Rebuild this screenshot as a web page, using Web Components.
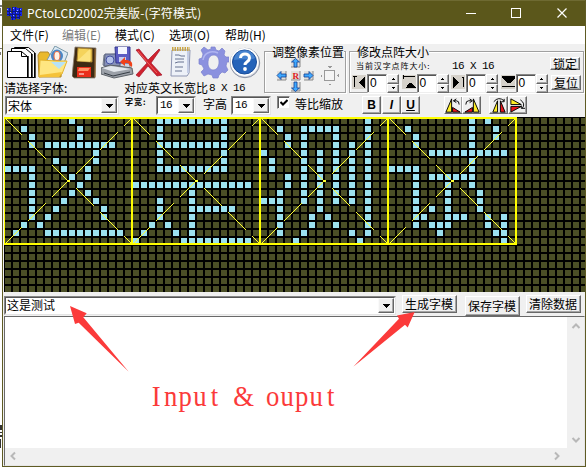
<!DOCTYPE html>
<html lang="zh-CN">
<head>
<meta charset="utf-8">
<title>PCtoLCD2002</title>
<style>
html,body{margin:0;background:#fff;overflow:hidden}
body{width:588px;height:469px;font:12px/14px "Liberation Sans","Noto Sans CJK SC",sans-serif;color:#000}
</style>
</head>
<body>
<lcd-app></lcd-app>
<script>
const CJK = '"Noto Sans CJK SC",sans-serif';
function define(name, css, html) {
  const t = document.createElement('template');
  customElements.define(name, class extends HTMLElement {
    constructor() {
      super();
      this.attachShadow({mode: 'open'});
    }
    connectedCallback() {
      if (this.shadowRoot.firstChild) return;
      t.innerHTML = '<style>*{box-sizing:border-box}:host{box-sizing:border-box}svg{display:block;flex:none}' + css + '</style>' + (typeof html === 'function' ? html(this) : html);
      this.shadowRoot.append(t.content.cloneNode(true));
    }
  });
}

define('title-bar',
  `:host{display:flex;height:26px;background:#5b571b;border-top:1px solid #6e6a32;color:#fff;align-items:center;padding:0 17px 1px 3px;font:12px/16px ${CJK}}
   .t{margin-left:5px;flex:1;white-space:nowrap;letter-spacing:.14px}`,
  `<svg width="16" height="15" viewBox="0 0 16 15" shape-rendering="crispEdges"><g fill="#1624e8"><path d="M1 2h4v8H1zM6 1h5v8H6zM11 2h5v8h-5zM5 7h4v7H5zM11 8h3v5h-3z"/></g><path d="M1 5h15M1 8h14M5 11h9M3 2v8M6 1v13M9 1v12M13 2v11" stroke="#0b1680" fill="none"/><path d="M1 3h1v1H1zM7 2h1v1H7zM11 4h1v1h-1zM7 9h1v1H7zM10 6h1v1h-1zM4 6h1v1H4zM14 3h1v1h-1z" fill="#8faaff"/></svg>
   <span class="t">PCtoLCD2002完美版-(字符模式)</span>
   <svg width="102" height="12" viewBox="0 0 102 12" stroke="#fff" fill="none"><path d="M0 6.5h10" shape-rendering="crispEdges"/><path d="M45.5 1.5h9v9h-9z" shape-rendering="crispEdges"/><path d="M91.500 1.500l9 9m0-9l-9 9" stroke-width="1.2"/></svg>`);

define('menu-bar',
  `:host{display:flex;height:18px;background:#fff;padding-left:7px;font:12px/17px ${CJK};white-space:nowrap}
   span{width:53px}.w{width:54px}.w2{width:56px}.d{color:#7a7a7a}`,
  `<span style="width:52px">文件(F)</span><span class="d">编辑(E)</span><span class="w">模式(C)</span><span class="w2">选项(O)</span><span>帮助(H)</span>`);

const icons = {
  docs: [30, `<g fill="#fff" stroke="#000"><path d="M7.500 1.500h14l6 5v25h-20z"/><path d="M4.500 2.500h14l6 5v24h-20z"/><path d="M.5 5.500h14l6 5v21H.5z"/><path d="M14.500 5.500v5h6" fill="none"/></g><path d="M21 10v22M25 8v24M28 7v25" stroke="#000" stroke-width="1.400"/>`],
  folder: [31, `<path d="M1 9l2-3h8l2 3h13l-2 22H2z" fill="#eab92c" stroke="#b48a2a"/><path d="M18 0l13 7-6 15-15-8z" fill="#ddeaf3" stroke="#7898a8"/><ellipse cx="20" cy="10" rx="6" ry="6.500" fill="#4b87c6"/><ellipse cx="20" cy="10" rx="3" ry="4.500" fill="#fff1e5" stroke="#f36b40"/><path d="M3 14l17 1 10 0-5 13L2 31z" fill="#ffe681" stroke="#e4b32e"/><path d="M14 16h15l-7 7z" fill="#b6e2f8"/><path d="M3 29l22-3-3 5H3z" fill="#f5c239"/>`],
  floppy: [25, `<path d="M3 1l21 1-1 30H2L0 30z" fill="#3e2a13" stroke="#8f8476" stroke-width=".8"/><path d="M6 2l14 1v13L5 15z" fill="#f5d35b" stroke="#ac852e"/><path d="M5 15L18 3v13z" fill="#ffe98e" opacity=".7"/><path d="M5 21h14v10H5z" fill="#eb2e1a"/><path d="M7 22h11l-2 3H6z" fill="#ff9468"/><path d="M7 28h5" stroke="#fff"/><path d="M23 3v28" stroke="#9c6a2c"/>`],
  disks: [33, `<path d="M3 9l13-1 13 9v5l-13 1L2 19z" fill="#cdd3dd" stroke="#747d89"/><path d="M4 8h15v12H3z" fill="#8791b8" stroke="#59617c"/><ellipse cx="9" cy="14" rx="4" ry="4" fill="#b4c1ea" stroke="#4450a0"/><path d="M0 22l9-3 22 3 1 6-19 4L0 28z" fill="#9ba0a8" stroke="#5e6369"/><path d="M1 22l9-2 20 3-17 3z" fill="#e3e7ec"/><path d="M3 27l9 3 17-4" stroke="#373e46" fill="none"/><path d="M14 1h15v16H15z" fill="#5b5bc2" stroke="#34388e"/><path d="M17 1h9v7h-9z" fill="#f4f6ff"/><path d="M18 11h7v5h-7z" fill="#c5cbf0"/><path d="M19 16l5-5v3c6 0 8 2 7 7l-3-2c0-2-1-2-4-2v3z" fill="#f04119"/>`],
  cross: [28, `<path d="M1 4l3-1 9 11L24 3l1 1-9 13 11 12-5 1-9-10L4 31l-3-2 11-12z" fill="#d0222d" stroke="#a3162c" stroke-width=".7"/><path d="M3 5l10 12 9 10" stroke="#ee635d" fill="none"/>`],
  note: [22, `<path d="M2 4h18l-1 23-2 3H1z" fill="#edf1f8" stroke="#8d95b2"/><path d="M17 5h2v22h-2z" fill="#c3cce4"/><path d="M2 3h18" stroke="#c8a546" stroke-width="4" stroke-dasharray="1.500 1"/><path d="M5 9h4l2 1h4M5 13h9M5 17l3-1h6M5 21h8M5 25h7" stroke="#677290" fill="none"/>`],
  gear: [31, `<path fill-rule="evenodd" d="M13 1h4l1 3 3 1 3-3 3 3-1 4 2 2h3v5h-2l-1 4 2 4-3 3-3-1-3 3-1 3h-5l-1-3-4-1-4 2-3-4 3-3-2-4-3-1v-5l3-1 1-4-2-4 3-3 4 3 3-1zM16 9c-4 0-6 3-6 8 0 4 2 7 5 7 4 0 6-4 6-8s-2-7-5-7z" fill="#8b91df" stroke="#7d83cf" stroke-width=".7"/><path d="M5 14c1-7 8-10 15-7" stroke="#b0b5f1" stroke-width="1.500" fill="none"/>`],
  help: [32, `<circle cx="16" cy="17" r="14.700" fill="#d6d9e2" stroke="#8890a1"/><circle cx="15.500" cy="16" r="14" fill="#fff"/><circle cx="15.500" cy="16" r="12" fill="#2563b9" stroke="#184b99"/><path d="M5 14C6 2 23 1 26 12c-5 3-13 0-21 2" fill="#5b97de" opacity=".6"/><path d="M11.500 12c0-5.500 9-5.500 9 0 0 4-4.500 3.500-4.500 7" fill="none" stroke="#fff" stroke-width="3"/><circle cx="16" cy="23" r="1.900" fill="#fff"/>`]
};
define('tool-icon', `:host{display:block;flex:none}`,
  e => { const i = icons[e.getAttribute('name')]; return `<svg width="${i[0]}" height="33" viewBox="0 0 ${i[0]} 33">${i[1]}</svg>`; });

define('combo-box',
  `:host{display:flex;background:#fff;border:1px solid;border-color:#868686 #e4e4e4 #e4e4e4 #868686;font:12px/15px ${CJK}}
   .in{flex:1;display:flex;border:1px solid;border-color:#555 #fff #fff #555;overflow:hidden}
   .t{flex:1;white-space:nowrap;padding-left:1px}
   :host([num]) .t{font:11px/15px "Liberation Mono",monospace;letter-spacing:-.6px;padding-left:2px}
   .b{width:16px;background:#f0f0f0;border:1px solid;border-color:#fafafa #666 #666 #fafafa;box-shadow:inset -1px -1px #aaa;display:flex;align-items:center;justify-content:center}`,
  `<div class="in"><span class="t"><slot></slot></span><span class="b"><svg width="7" height="4" shape-rendering="crispEdges"><path d="M0 0h7v1H6v1H5v1H4v1H3V3H2V2H1V1H0z"/></svg></span></div>`);

define('push-button',
  `:host{display:flex;align-items:center;justify-content:center;flex:none;background:#f0f0f0;border:1px solid;border-color:#fff #696969 #696969 #fff;box-shadow:inset -1px -1px #a5a5a5;font:12px/12px ${CJK};white-space:nowrap}`,
  `<slot></slot>`);

define('group-box',
  `:host{display:block;flex:none;height:49px;padding-top:7px}
   .b{height:42px;border:1px solid #a0a0a0;box-shadow:1px 1px #fff,inset 1px 1px #fff;display:flex;flex-direction:column}
   .l{align-self:flex-start;margin:-8px 0 0 7px;background:#f0f0f0;height:14px;font:12px/15px ${CJK};flex:none;white-space:nowrap}`,
  `<div class="b"><span class="l"><slot name="legend"></slot></span><slot></slot></div>`);

const marks = {
  left: 'M1 1h4v1H1zM2 1h1v11H2zM13 2v11L7 7.500z',
  top: 'M1 1h12v1H1zM1 0h1v4H1zM4 13l3-5h3l4 5z',
  right: 'M2 2v11l6-5.500zM11 2h2v1h-2zM12 2h1v10h-1z',
  bottom: 'M1 1h13v2L9 8H6L1 3zM1 11h13v1H1z'
};
define('spin-field',
  `:host{display:flex;flex:none;width:49.500px;height:19px}
   .i{width:14px;height:14px;margin:1px 1px 0 0;background:#d5d1ca;flex:none}
   .f{width:20px;background:#fff;border:1px solid;border-color:#868686 #eee #eee #868686;box-shadow:inset 1px 1px #555;font:12px/17px "Liberation Sans",sans-serif;padding-left:2px}
   .s{display:flex;flex-direction:column;width:12px}
   push-button{height:9.500px;width:12px}`,
  e => `<div class="i"><svg width="14" height="14" shape-rendering="crispEdges"><path d="${marks[e.getAttribute('mark')]}"/></svg></div><div class="f">0</div><div class="s"><push-button><svg width="3" height="2"><path d="M1 0h1v1h1v1H0V1h1z"/></svg></push-button><push-button><svg width="3" height="2"><path d="M0 0h3v1H2v1H1V1H0z"/></svg></push-button></div>`);

define('pixel-pad', `:host{display:block;margin-left:11px}`,
  () => {
    const btn = (x, y) => `<path d="M${x} ${y}h9v9h-9z" fill="#e2e0dc"/><path d="M${x} ${y + 9}h9v-9" stroke="#888" fill="none"/>`;
    return `<svg width="66" height="35" viewBox="0 0 66 35">${btn(15, 0)}${btn(1, 13)}${btn(15, 13)}${btn(28, 13)}${btn(15, 24)}
    <g fill="#3fa9ff" stroke="#123e91" stroke-width=".8"><path d="M18 9V4h-2.500l4-3.500 4 3.500H21v5z"/><path d="M18 24v6h-2.500l4 3.500 4-3.500H21v-6z"/><path d="M10 16H5v-2.500l-4 4 4 4V19h5z"/><path d="M28 16h5v-2.500l4 4-4 4V19h-5z"/></g>
    <text x="16.500" y="21" font-family="Liberation Serif,serif" font-weight="bold" font-size="9" fill="#df1b1b">R</text>
    <g shape-rendering="crispEdges"><path d="M48.500 12.500h10v10h-10z" fill="#f4f4f4" stroke="#999"/><path d="M52 8h4v1h-1v1h-2V9h-1zM53 26h2v1h-2zM45 17h1v2h-1zM61 17h1v-1h1v3h-1v-1h-1z" fill="#999"/></g></svg>`;
  });

const flips = {
  rl: '<path d="M7 2v14H1z" fill="#ffee25" stroke="#000"/><path d="M8 11v5h8z" fill="#e9141b" stroke="#000"/><path d="M9 4h3q3 0 3 4M12 2L9 4l3 2" fill="none" stroke="#000"/>',
  rr: '<path d="M11 2v14h6z" fill="#ffee25" stroke="#000"/><path d="M10 11v5H2z" fill="#e9141b" stroke="#000"/><path d="M9 4H6Q3 4 3 8M7 2l3 2-3 2" fill="none" stroke="#000"/>',
  fh: '<path d="M8 4v12H3z" fill="#ffee25" stroke="#000"/><path d="M11 4v12h5z" fill="#e9141b" stroke="#000"/><path d="M4 5q5-6 11-1M12 5h3V2" fill="none" stroke="#000"/>',
  fv: '<path d="M2 2v6h11z" fill="#ffee25" stroke="#000"/><path d="M2 16v-6h11z" fill="#e9141b" stroke="#000"/><path d="M12 3q6 4 2 9M17 12h-4V9" fill="none" stroke="#000"/>'
};
define('flip-icon', `:host{display:block;width:17px;height:16px}`, e => `<svg width="17" height="17" viewBox="0 0 18 18">${flips[e.getAttribute('name')]}</svg>`);

define('tool-bar',
  `:host{display:flex;flex-direction:column;height:73px;background:#f0f0f0;font:12px/14px ${CJK};white-space:nowrap}
   .top{display:flex;height:51px}.left{width:261px;flex:none}
   .icons{display:flex;height:37px;padding:2px 0 0 4px}
   .labels{display:flex;height:14px;line-height:14px;padding-left:1px}
   .ratio{margin-left:60px;width:85px}
   .mono{font-family:"Liberation Mono",monospace;font-size:11px;letter-spacing:-.6px;line-height:14px}
   .bot{display:flex;height:22px;padding:1px 0 0 2px;align-items:flex-start}
   .sm{font-size:8px;font-weight:bold;line-height:12px}
   .inner{display:flex;height:13px;padding:0 3px 0 6px;align-items:flex-start}
   .spins{display:flex;padding:3px 0 0 2px;height:23px}
   .chk{width:13px;height:13px;margin:0 5px 0 6px;background:#fff;border:1px solid;border-color:#868686 #eee #eee #868686;box-shadow:inset 1px 1px #555;padding:2px}
   .bot push-button{width:19px;height:18px;font:bold 12px/12px "Liberation Sans",sans-serif}`,
  `<div class="top"><div class="left">
     <div class="icons"><tool-icon name="docs"></tool-icon><tool-icon name="folder"></tool-icon><tool-icon name="floppy" style="margin-left:4px"></tool-icon><tool-icon name="disks" style="margin-left:4px"></tool-icon><tool-icon name="cross" style="margin-left:1px"></tool-icon><tool-icon name="note" style="margin-left:7px"></tool-icon><tool-icon name="gear" style="margin-left:6px"></tool-icon><tool-icon name="help"></tool-icon></div>
     <div class="labels"><span style="width:60px">请选择字体:</span><span class="ratio">对应英文长宽比</span><span class="mono">8 X 16</span></div>
   </div>
   <group-box style="width:82px"><span slot="legend">调整像素位置</span><pixel-pad></pixel-pad></group-box>
   <group-box style="width:235px;margin-left:3px"><span slot="legend">修改点阵大小</span>
     <div class="inner"><span style="font-size:8px;line-height:16px;width:96px;letter-spacing:.9px">当前汉字点阵大小:</span><span class="mono" style="line-height:17px;flex:1">16 X 16</span><push-button style="width:30px;height:13px;margin-top:-1px">锁定</push-button></div>
     <div class="spins"><spin-field mark="left"></spin-field><spin-field mark="top"></spin-field><spin-field mark="right"></spin-field><spin-field mark="bottom"></spin-field><push-button style="width:30px;height:15px;margin:1px 0 0 1px">复位</push-button></div>
   </group-box></div>
   <div class="bot"><combo-box style="width:114px;height:19px">宋体</combo-box><span class="sm" style="margin-left:6px;width:31px;letter-spacing:1px">字宽:</span><combo-box num style="width:40px;height:19px">16</combo-box><span style="margin-left:7px;width:28px;line-height:15px">字高</span><combo-box num style="width:40px;height:19px">16</combo-box>
   <span class="chk"><svg width="8" height="8" viewBox="0 0 8 8"><path d="M.5 3l2.500 2.500L7.500 1" fill="none" stroke="#000" stroke-width="2"/></svg></span><span style="width:67px;line-height:15px">等比缩放</span>
   <push-button>B</push-button><push-button style="margin-left:1px;font-style:italic">I</push-button><push-button style="text-decoration:underline">U</push-button>
   <push-button style="margin-left:24px"><flip-icon name="rl"></flip-icon></push-button><push-button style="margin-left:-1px"><flip-icon name="rr"></flip-icon></push-button><push-button style="margin-left:8px"><flip-icon name="fh"></flip-icon></push-button><push-button><flip-icon name="fv"></flip-icon></push-button></div>`);

/* Lit columns of each of the 16 rows, one matrix per character. */
const glyphs = [
  [[8],[2,9],[3,9],[3,5,6,7,8,9,10,11,12,13],[11],[6,11],[0,1,2,3,7,10],[3,8,10],[3,9],[3,8,10],[3,7,11],[3,6,12],[3,5,12],[2,4],[1,5,6,7,8,9,10,11,12,13,14],[]],
  [[3,4,5,6,7,8,9,10,11],[3,11],[3,11],[3,4,5,6,7,8,9,10,11],[3,11],[3,11],[3,4,5,6,7,8,9,10,11],[],[0,1,2,3,4,5,6,7,8,9,10,11,12,13,14],[7],[3,7],[3,7,8,9,10,11,12],[3,7],[2,4,7],[1,5,7],[0,6,7,8,9,10,11,12,13,14]],
  [[13],[2,5,6,7,8,9,13],[3,5,9,13],[3,5,9,11,13],[0,5,7,9,11,13],[1,5,7,9,11,13],[1,5,7,9,11,13],[3,5,7,9,11,13],[3,5,7,9,11,13],[2,5,7,9,11,13],[0,1,2,5,7,9,11,13],[2,7,13],[2,6,8,13],[2,6,9,13],[2,5,11,13],[4,12]],
  [[10,12],[2,10,13],[3,10,13],[3,10],[5,6,7,8,9,10,11,12,13,14],[10],[0,1,2,3,10],[3,5,6,7,8,9,10],[3,7,10],[3,7,11],[3,7,11],[3,5,7,11],[3,4,7,8,9,12,14],[3,5,6,7,12,14],[6,13,14],[14]]
];
define('dot-matrix', `:host{display:block;height:175px;overflow:hidden;padding-left:1px;background:#f0f0f0}`,
  () => {
    let lit = '', diag = '';
    glyphs.forEach((g, n) => {
      const o = 128 * n;
      g.forEach((cols, r) => cols.forEach(c => lit += `M${1 + o + c * 8} ${1 + r * 8}h6v6h-6z`));
      for (let i = 1; i < 127; i++) {
        if (i % 24 >= 18) continue;
        const y = Math.round(i * 126 / 127);
        diag += `M${o + i} ${y}h1v1h-1zM${o + i} ${127 - y}h1v1h-1z`;
      }
    });
    let frame = 'M0 0h513v2H0zM0 126h513v2H0zM0 0h1v128H0z';
    for (let n = 1; n < 5; n++) frame += `M${128 * n - 1} 0h2v128h-2z`;
    return `<svg width="581" height="175" shape-rendering="crispEdges"><defs><pattern id="g" x="1" y="1" width="8" height="8" patternUnits="userSpaceOnUse"><path d="M0 0h6v6H0z" fill="#4b4f26"/></pattern></defs><path d="M0 0h581v175H0z"/><path d="M1 1h580v174H1z" fill="url(#g)"/><path d="${lit}" fill="#9ce1ef"/><path d="${diag}" fill="#ffff30"/><path d="${frame}" fill="#ff0"/></svg>`;
  });

define('input-row',
  `:host{display:flex;height:24px;background:#f0f0f0;padding:3px 4px 0 1px;align-items:flex-start}
   combo-box{width:393px;height:19px;margin-top:1px;line-height:14px}
   push-button{width:55px;height:18px;padding-right:1px}`,
  `<combo-box>这是测试</combo-box><push-button style="margin-left:6px">生成字模</push-button><push-button style="margin-left:8px;height:20px;margin-top:1px">保存字模</push-button><push-button style="margin-left:6px">清除数据</push-button>`);

define('memo-box',
  `:host{display:grid;grid-template:131px 17px/562px 17px;height:150px;margin-left:1px;width:581px;background:#fff;border:1px solid;border-color:#696969 #e6e6e6 #e6e6e6 #696969}
   .s{background:#f0f0f0}.v{display:flex;flex-direction:column;justify-content:space-between;align-items:center;padding:5px 0 4px}
   .h{display:flex;justify-content:space-between;align-items:center;padding:0 5px 2px 3px}`,
  () => { const a = d => `<svg width="10" height="10" fill="none" stroke="#b8b8b8" stroke-width="2"><path d="${d}"/></svg>`;
    return `<div></div><div class="s v">${a('M1.500 6L5 2.500 8.500 6')}${a('M1.500 4L5 7.500 8.500 4')}</div><div class="s h">${a('M7 1.500L3.500 5 7 8.500')}${a('M3 1.500L6.500 5 3 8.500')}</div><div class="s"></div>`; });

define('note-layer', `:host{position:absolute;left:0;top:0;pointer-events:none}`,
  () => {
    const s = 'Input & ouput', xs = [...s].map((c, i) => ((156.200 + i * 14.550) / .92).toFixed(1)).join(' ');
    return `<svg width="588" height="469"><g fill="#fb3a3a"><path d="M70 306L86.700 313.300 83.300 317.300 128.700 371.700 78.700 322.700 75 324z"/><path d="M414.700 312L397 315.500 399 318.700 353.300 366.700 405 324.700 407.700 327.500z"/>
    <text x="${xs}" y="406" text-anchor="middle" transform="scale(.92 1)" font-family="Liberation Serif,serif" font-size="29">${s.replace('&', '&amp;')}</text></g>
    <g fill="#333"><path d="M0 5h2v2H0zM0 8h1v5H0zM0 14h2v2H0zM0 48h2v1H0zM0 52h1v3H0z" fill="#777"/><path d="M0 425h2v5H0zM0 432h2v1H0zM0 435h2v2H0zM0 439h1v9H0z"/></g></svg>`;
  });

define('lcd-app',
  `:host{display:block;position:relative;width:588px;height:469px}
   .w{margin-left:2px;width:584px;height:467px;border:solid #5f5b24;border-width:0 1px 1px;background:#f0f0f0}`,
  `<div class="w"><title-bar></title-bar><menu-bar></menu-bar><tool-bar></tool-bar><dot-matrix></dot-matrix><input-row></input-row><memo-box></memo-box></div><note-layer></note-layer>`);
</script>
</body>
</html>
